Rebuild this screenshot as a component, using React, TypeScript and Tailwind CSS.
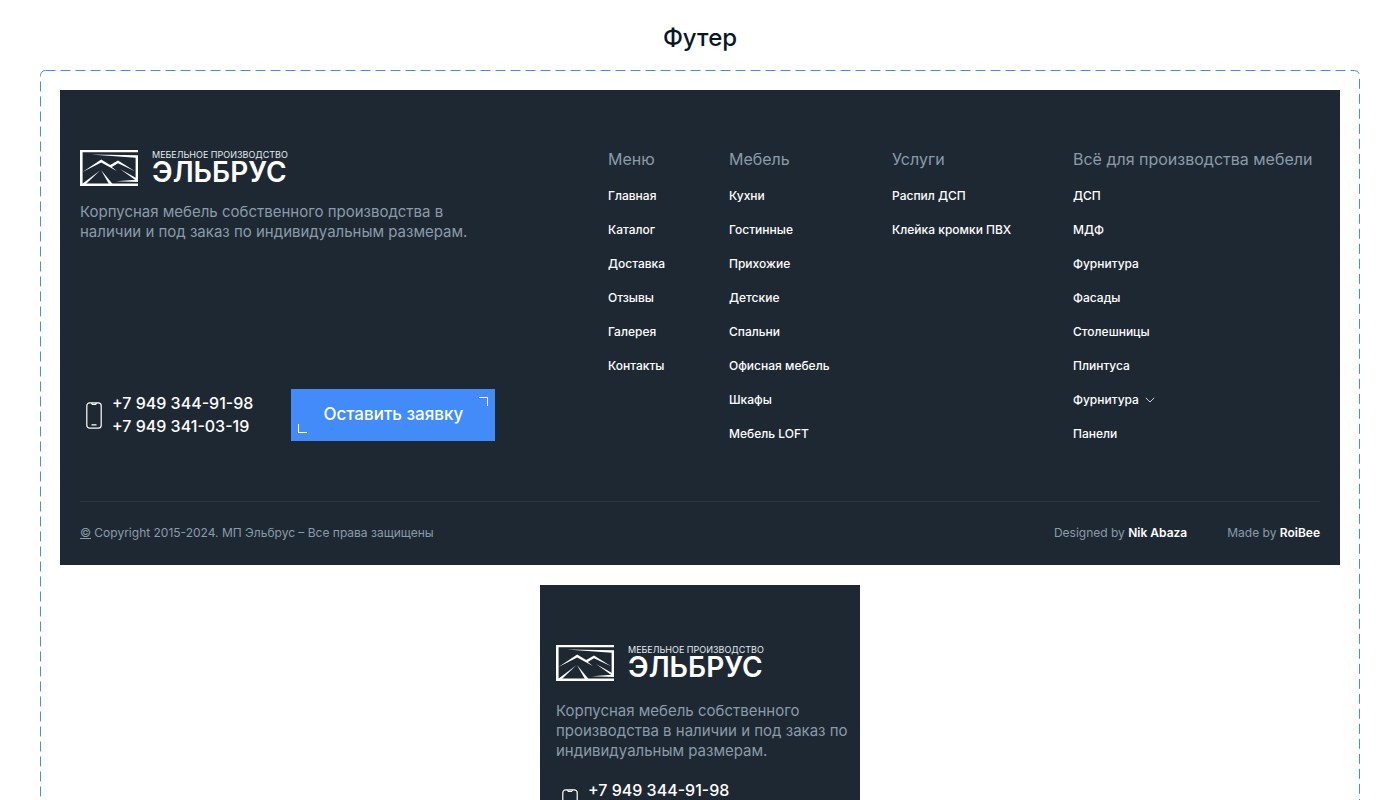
import React from "react";

type LinkColumn = { title: string; items: string[] };

const columns: LinkColumn[] = [
  { title: "Меню", items: ["Главная", "Каталог", "Доставка", "Отзывы", "Галерея", "Контакты"] },
  {
    title: "Мебель",
    items: ["Кухни", "Гостинные", "Прихожие", "Детские", "Спальни", "Офисная мебель", "Шкафы", "Мебель LOFT"],
  },
  { title: "Услуги", items: ["Распил ДСП", "Клейка кромки ПВХ"] },
  {
    title: "Всё для производства мебели",
    items: ["ДСП", "МДФ", "Фурнитура", "Фасады", "Столешницы", "Плинтуса", "Фурнитура", "Панели"],
  },
];

function Logo() {
  return (
    <a href="#" className="flex w-fit items-start gap-3.5 text-white">
      <svg width="58" height="36" viewBox="0 0 58 36" fill="currentColor" aria-hidden="true">
        <path d="M0 0H58V2.2H2.6V33.6H58V36H0Z" />
        <path d="M11 4.6L58 5.3V32L36 31.2L55.6 29.8V7.8Z" />
        <path d="M2.5 22L21.2 9.4L30.2 15L38 10.4L55 21.2L38 13.2L31.8 17L36.8 21L21.2 12.4Z" />
        <path d="M2 34L20 20.5L5.4 34.5H2Z" />
        <path d="M21 20L33 34.5H29.2Z" />
        <path d="M40 19L56 28V30.6Z" />
      </svg>
      <span className="flex flex-col">
        <span className="text-[9px] leading-[10px] whitespace-nowrap text-slate-200">МЕБЕЛЬНОЕ ПРОИЗВОДСТВО</span>
        <span className="text-[28px] leading-6 font-semibold">ЭЛЬБРУС</span>
      </span>
    </a>
  );
}

function Phones() {
  return (
    <div className="flex items-center gap-2.5 pl-1.5 text-white">
      <svg width="16" height="27" viewBox="0 0 16 27" fill="none" stroke="currentColor" strokeWidth="1.2" aria-hidden="true">
        <rect x="0.8" y="0.8" width="14.4" height="25.4" rx="3" />
        <path d="M5.5 1L6.3 2.4H9.7L10.5 1M5.5 22.8H10.5" />
      </svg>
      <div className="flex flex-col text-base leading-[23px] font-medium whitespace-nowrap">
        <a href="tel:+79493449198">+7 949 344-91-98</a>
        <a href="tel:+79493410319">+7 949 341-03-19</a>
      </div>
    </div>
  );
}

function RequestButton() {
  return (
    <button type="button" className="relative h-13 w-51 bg-[#448bfa] text-[17px] font-medium whitespace-nowrap text-white">
      Оставить заявку
      <span className="absolute top-2 right-[7px] size-[9px] border-t border-r border-white" />
      <span className="absolute bottom-2 left-[7px] size-[9px] border-b border-l border-white" />
    </button>
  );
}

function Column({ title, items }: LinkColumn) {
  return (
    <nav aria-label={title} className="whitespace-nowrap">
      <h2 className="text-base leading-[18px] text-[#8a9baa]">{title}</h2>
      <ul className="mt-[21px] flex flex-col gap-5 text-xs leading-[14px] font-medium text-white">
        {items.map((item, i) => (
          <li key={i}>
            <a href="#" className="flex items-center gap-1.5">
              {item}
              {i === 6 && item === "Фурнитура" && (
                <svg width="10" height="6" viewBox="0 0 10 6" fill="none" stroke="currentColor" strokeWidth="0.8" aria-hidden="true">
                  <path d="M0.8 0.8L5 5L9.2 0.8" />
                </svg>
              )}
            </a>
          </li>
        ))}
      </ul>
    </nav>
  );
}

function DesktopFooter() {
  return (
    <footer className="bg-[#1e2833] px-5 pt-15 pb-[22px]">
      <div className="flex justify-between gap-10">
        <div className="flex flex-col justify-between">
          <div>
            <Logo />
            <p className="mt-4 text-[15px] leading-5 whitespace-nowrap text-[#8a9baa]">
              Корпусная мебель собственного производства в
              <br />
              наличии и под заказ по индивидуальным размерам.
            </p>
          </div>
          <div className="flex items-center gap-[38px]">
            <Phones />
            <RequestButton />
          </div>
        </div>
        <div className="grid grid-cols-[61px_103px_121px_247px] gap-15">
          {columns.map((column) => (
            <Column key={column.title} {...column} />
          ))}
        </div>
      </div>
      <div className="mt-15 flex items-center justify-between border-t border-[#2b3641] pt-[21px] text-xs leading-5 text-[#8a9baa]">
        <p>
          <span className="underline">©</span> Copyright 2015-2024. МП Эльбрус – Все права защищены
        </p>
        <div className="flex gap-10">
          <p>
            Designed by <a href="#" className="font-semibold text-white">Nik Abaza</a>
          </p>
          <p>
            Made by <a href="#" className="font-semibold text-white">RoiBee</a>
          </p>
        </div>
      </div>
    </footer>
  );
}

function MobileFooter() {
  return (
    <footer className="mx-auto w-80 bg-[#1e2833] px-4 py-15">
      <Logo />
      <p className="mt-5 text-[15px] leading-5 whitespace-nowrap text-[#8a9baa]">
        Корпусная мебель собственного
        <br />
        производства в наличии и под заказ по
        <br />
        индивидуальным размерам.
      </p>
      <div className="mt-[18px]">
        <Phones />
      </div>
    </footer>
  );
}

export default function App() {
  return (
    <main className="h-screen overflow-hidden bg-white px-10 pt-5 font-['Inter','Liberation_Sans',sans-serif]">
      <h1 className="text-center text-2xl leading-9 font-medium text-[#0a1628]">Футер</h1>
      <div className="relative mt-3.5 flex min-h-screen flex-col gap-5 p-5">
        <svg
          className="pointer-events-none absolute top-0 left-0 h-full w-[calc(100%-1px)] overflow-visible"
          fill="none"
          aria-hidden="true"
        >
          <rect x="0.5" y="0.5" width="100%" height="100%" rx="5" stroke="#448bfa" strokeDasharray="10 5" />
        </svg>
        <DesktopFooter />
        <MobileFooter />
      </div>
    </main>
  );
}
